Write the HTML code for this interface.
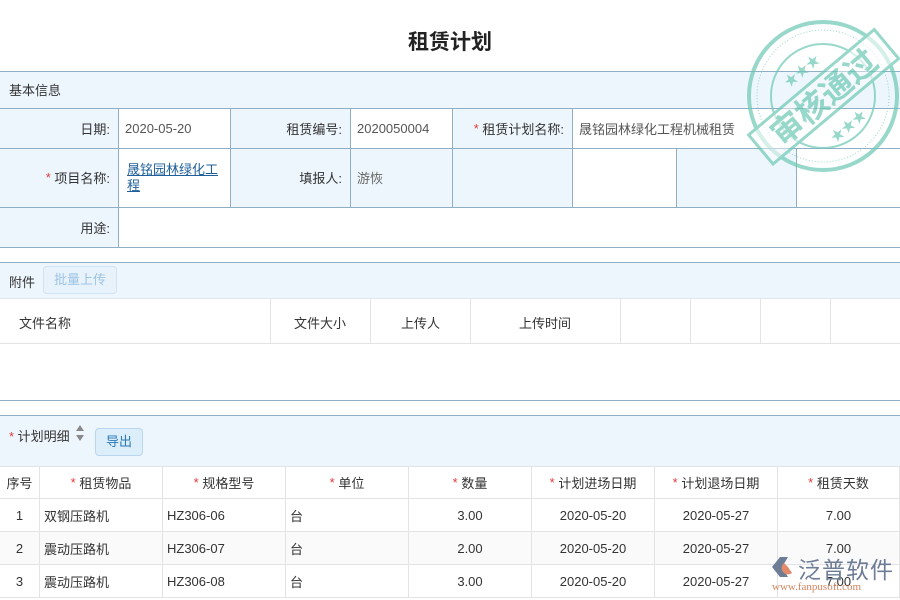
<!DOCTYPE html>
<html><head><meta charset="utf-8"><style>
*{margin:0;padding:0;box-sizing:border-box}
body{width:900px;height:600px;overflow:hidden;background:#fff;font-family:"Liberation Sans","Noto Sans CJK SC",sans-serif;font-size:13px;color:#333;position:relative}
.a{position:absolute}
.lb{background:#eef6fd}
.s{color:#e03a3a}
.c{position:absolute;display:flex;align-items:center}
.g{border-right:1px solid #e3e3e3;border-bottom:1px solid #e3e3e3}
</style></head><body>
<div class="a" style="left:0;top:26px;width:900px;text-align:center;font-size:21px;font-weight:bold;color:#222">租赁计划</div>

<div class="a lb" style="left:0;top:71px;width:900px;height:38px;border-top:1px solid #8fb0c4;border-bottom:1px solid #8fb0c4"></div>
<div class="a" style="left:9px;top:80px">基本信息</div>

<div class="c lb" style="left:0;top:109px;width:118px;height:39px;justify-content:flex-end;padding-right:8px">日期:</div>
<div class="c" style="left:118px;top:109px;width:112px;height:39px;padding-left:7px;color:#555">2020-05-20</div>
<div class="c lb" style="left:230px;top:109px;width:120px;height:39px;justify-content:flex-end;padding-right:8px">租赁编号:</div>
<div class="c" style="left:350px;top:109px;width:102px;height:39px;padding-left:7px;color:#555">2020050004</div>
<div class="c lb" style="left:452px;top:109px;width:120px;height:39px;justify-content:flex-end;padding-right:8px"><span class="s">*</span>&nbsp;租赁计划名称:</div>
<div class="c" style="left:572px;top:109px;width:328px;height:39px;padding-left:7px;color:#555">晟铭园林绿化工程机械租赁</div>
<div class="c lb" style="left:0;top:148px;width:118px;height:59px;justify-content:flex-end;padding-right:8px"><span class="s">*</span>&nbsp;项目名称:</div>
<div class="a" style="left:127px;top:162px;width:100px;line-height:16px;color:#1f5f9a;text-decoration:underline">晟铭园林绿化工程</div>
<div class="c lb" style="left:230px;top:148px;width:120px;height:59px;justify-content:flex-end;padding-right:8px">填报人:</div>
<div class="c lb" style="left:350px;top:148px;width:102px;height:59px;padding-left:7px;color:#666">游恢</div>
<div class="a lb" style="left:452px;top:148px;width:120px;height:59px"></div>
<div class="a lb" style="left:676px;top:148px;width:120px;height:59px"></div>
<div class="c lb" style="left:0;top:207px;width:118px;height:40px;justify-content:flex-end;padding-right:8px">用途:</div>
<div class="a" style="left:0;top:148px;width:900px;height:1px;background:#8fb0c4"></div>
<div class="a" style="left:0;top:207px;width:900px;height:1px;background:#8fb0c4"></div>
<div class="a" style="left:0;top:247px;width:900px;height:1px;background:#8fb0c4"></div>
<div class="a" style="left:118px;top:109px;width:1px;height:138px;background:#8fb0c4"></div>
<div class="a" style="left:230px;top:109px;width:1px;height:98px;background:#8fb0c4"></div>
<div class="a" style="left:350px;top:109px;width:1px;height:98px;background:#8fb0c4"></div>
<div class="a" style="left:452px;top:109px;width:1px;height:98px;background:#8fb0c4"></div>
<div class="a" style="left:572px;top:109px;width:1px;height:98px;background:#8fb0c4"></div>
<div class="a" style="left:676px;top:148px;width:1px;height:59px;background:#8fb0c4"></div>
<div class="a" style="left:796px;top:148px;width:1px;height:59px;background:#8fb0c4"></div>

<div class="a lb" style="left:0;top:262px;width:900px;height:37px;border-top:1px solid #8fb0c4;border-bottom:1px solid #e0e6ec"></div>
<div class="a" style="left:9px;top:272px">附件</div>
<div class="a" style="left:43px;top:266px;width:74px;height:28px;border:1px solid #d2e4f2;border-radius:4px;background:#e8f2fb;color:#9cc4e4;text-align:center;line-height:26px">批量上传</div>
<div class="a" style="left:0;top:299px;width:900px;height:45px;border-bottom:1px solid #e3e3e3"></div>
<div class="a" style="left:19px;top:313px">文件名称</div>
<div class="a" style="left:294px;top:313px">文件大小</div>
<div class="a" style="left:401px;top:313px">上传人</div>
<div class="a" style="left:519px;top:313px">上传时间</div>
<div class="a" style="left:270px;top:299px;width:1px;height:45px;background:#e3e3e3"></div>
<div class="a" style="left:370px;top:299px;width:1px;height:45px;background:#e3e3e3"></div>
<div class="a" style="left:470px;top:299px;width:1px;height:45px;background:#e3e3e3"></div>
<div class="a" style="left:620px;top:299px;width:1px;height:45px;background:#e3e3e3"></div>
<div class="a" style="left:690px;top:299px;width:1px;height:45px;background:#e3e3e3"></div>
<div class="a" style="left:760px;top:299px;width:1px;height:45px;background:#e3e3e3"></div>
<div class="a" style="left:830px;top:299px;width:1px;height:45px;background:#e3e3e3"></div>
<div class="a" style="left:0;top:400px;width:900px;height:1px;background:#8fb0c4"></div>

<div class="a lb" style="left:0;top:415px;width:900px;height:52px;border-top:1px solid #8fb0c4;border-bottom:1px solid #e3e3e3"></div>
<div class="a" style="left:9px;top:426px"><span class="s">*</span> 计划明细</div>
<svg class="a" style="left:74px;top:424px" width="12" height="18"><path d="M6 1L10 7H2Z M6 17L10 11H2Z" fill="#888"/></svg>
<div class="a" style="left:95px;top:428px;width:48px;height:28px;border:1px solid #b9d6ee;border-radius:4px;background:#ddeefb;color:#2a78b8;text-align:center;line-height:26px">导出</div>

<div class="a" style="left:0;top:467px;width:900px;height:132px">
<div style="display:flex;height:32px">
<div class="c g" style="position:relative;width:40px;justify-content:center">序号</div>
<div class="c g" style="position:relative;width:123px;justify-content:center"><span class="s">*</span>&nbsp;租赁物品</div>
<div class="c g" style="position:relative;width:123px;justify-content:center"><span class="s">*</span>&nbsp;规格型号</div>
<div class="c g" style="position:relative;width:123px;justify-content:center"><span class="s">*</span>&nbsp;单位</div>
<div class="c g" style="position:relative;width:123px;justify-content:center"><span class="s">*</span>&nbsp;数量</div>
<div class="c g" style="position:relative;width:123px;justify-content:center"><span class="s">*</span>&nbsp;计划进场日期</div>
<div class="c g" style="position:relative;width:123px;justify-content:center"><span class="s">*</span>&nbsp;计划退场日期</div>
<div class="c g" style="position:relative;width:122px;justify-content:center"><span class="s">*</span>&nbsp;租赁天数</div>
</div>
<div style="display:flex;height:33px">
<div class="c g" style="position:relative;width:40px;justify-content:center">1</div>
<div class="c g" style="position:relative;width:123px;padding-left:4px">双钢压路机</div>
<div class="c g" style="position:relative;width:123px;padding-left:4px">HZ306-06</div>
<div class="c g" style="position:relative;width:123px;padding-left:4px">台</div>
<div class="c g" style="position:relative;width:123px;justify-content:center">3.00</div>
<div class="c g" style="position:relative;width:123px;justify-content:center">2020-05-20</div>
<div class="c g" style="position:relative;width:123px;justify-content:center">2020-05-27</div>
<div class="c g" style="position:relative;width:122px;justify-content:center">7.00</div>
</div>
<div style="display:flex;height:33px;background:#fafafa">
<div class="c g" style="position:relative;width:40px;justify-content:center">2</div>
<div class="c g" style="position:relative;width:123px;padding-left:4px">震动压路机</div>
<div class="c g" style="position:relative;width:123px;padding-left:4px">HZ306-07</div>
<div class="c g" style="position:relative;width:123px;padding-left:4px">台</div>
<div class="c g" style="position:relative;width:123px;justify-content:center">2.00</div>
<div class="c g" style="position:relative;width:123px;justify-content:center">2020-05-20</div>
<div class="c g" style="position:relative;width:123px;justify-content:center">2020-05-27</div>
<div class="c g" style="position:relative;width:122px;justify-content:center">7.00</div>
</div>
<div style="display:flex;height:33px">
<div class="c g" style="position:relative;width:40px;justify-content:center">3</div>
<div class="c g" style="position:relative;width:123px;padding-left:4px">震动压路机</div>
<div class="c g" style="position:relative;width:123px;padding-left:4px">HZ306-08</div>
<div class="c g" style="position:relative;width:123px;padding-left:4px">台</div>
<div class="c g" style="position:relative;width:123px;justify-content:center">3.00</div>
<div class="c g" style="position:relative;width:123px;justify-content:center">2020-05-20</div>
<div class="c g" style="position:relative;width:123px;justify-content:center">2020-05-27</div>
<div class="c g" style="position:relative;width:122px;justify-content:center">7.00</div>
</div>
</div>

<svg class="a" style="left:745px;top:18px;opacity:.7" width="156" height="156" viewBox="0 0 156 156">
<circle cx="78" cy="78" r="74" fill="none" stroke="#6cc8b4" stroke-width="4"/>
<circle cx="78" cy="78" r="66" fill="none" stroke="#6cc8b4" stroke-width="1" stroke-dasharray="1 2"/>
<circle cx="78" cy="78" r="52" fill="none" stroke="#6cc8b4" stroke-width="2"/>
<g transform="rotate(-40 78 78)">
<rect x="-4" y="60" width="164" height="38" fill="rgba(255,255,255,0.6)" stroke="#6cc8b4" stroke-width="3"/>
<text x="78" y="91" text-anchor="middle" font-size="32" font-weight="bold" fill="#6cc8b4" font-family="Noto Sans CJK SC,sans-serif">审核通过</text>
<text x="78" y="50" text-anchor="middle" font-size="14" fill="#6cc8b4">★★★</text>
<text x="78" y="122" text-anchor="middle" font-size="14" fill="#6cc8b4">★★★</text>
</g>
</svg>

<svg class="a" style="left:770px;top:555px" width="28" height="24"><path d="M10 2L2 12L10 22H18L12 12L18 2Z" fill="#6d7d96"/><path d="M14 8A6 6 0 1 0 22 18L18 12Z" fill="#e28a6a"/></svg>
<div class="a" style="left:798px;top:551px;font-size:23px;color:#6d7d96;letter-spacing:1px">泛普软件</div>
<div class="a" style="left:772px;top:581px;font-size:11px;color:#d2845e;font-family:'Liberation Serif',serif">www.fanpusoft.com</div>
</body></html>
